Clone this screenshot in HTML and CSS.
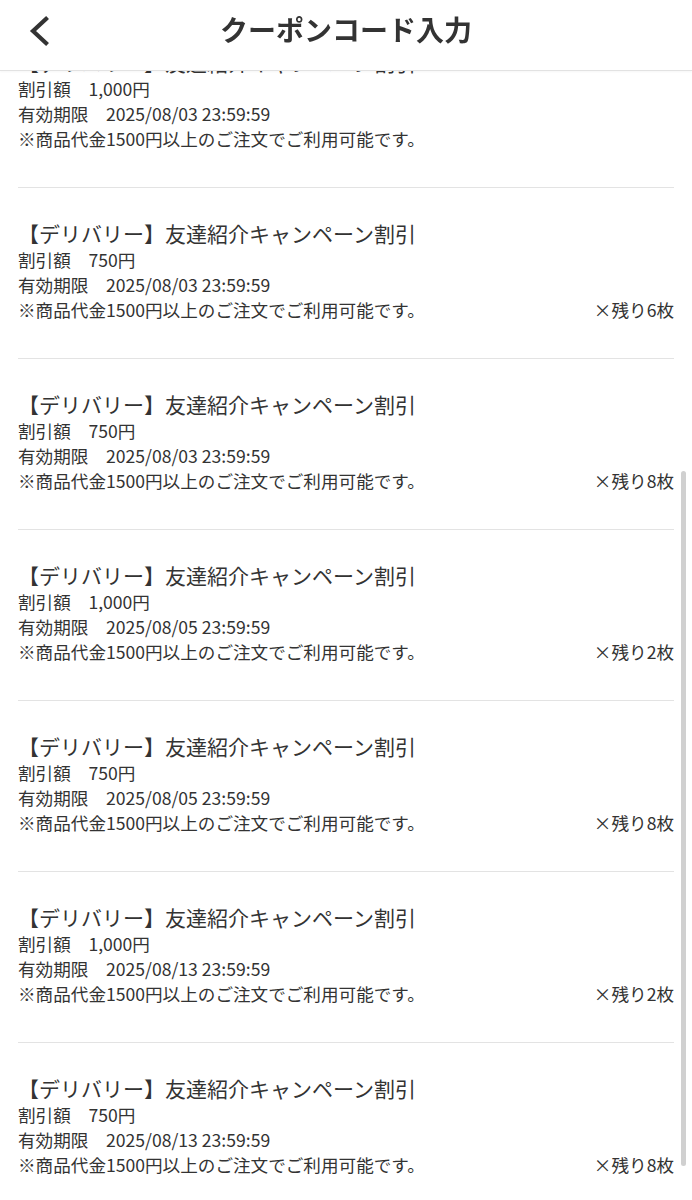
FILE: index.html
```html
<!DOCTYPE html>
<html lang="ja">
<head>
    <meta charset="UTF-8">
    <meta name="viewport" content="width=device-width, initial-scale=1.0">
    <title>クーポンコード入力</title>
    <link rel="stylesheet" href="styles.css">
</head>
<body>
    <header class="top-bar">
        <a class="back" href="#" aria-label="戻る">
            <svg width="24" height="32" viewBox="0 0 24 32">
                <path d="M20 4 L7 16 L20 28" fill="none" stroke="#333" stroke-width="4.2" stroke-linecap="square"/>
            </svg>
        </a>
        <h1>クーポンコード入力</h1>
    </header>

    <main class="coupon-list">
        <!-- 先頭のクーポンはヘッダーの下に隠れている -->
        <div class="coupon">
            <p class="coupon-title">【デリバリー】友達紹介キャンペーン割引</p>
            <p>割引額　1,000円</p>
            <p>有効期限　2025/08/03 23:59:59</p>
            <div class="coupon-foot">
                <p>※商品代金1500円以上のご注文でご利用可能です。</p>
            </div>
        </div>

        <div class="coupon">
            <p class="coupon-title">【デリバリー】友達紹介キャンペーン割引</p>
            <p>割引額　750円</p>
            <p>有効期限　2025/08/03 23:59:59</p>
            <div class="coupon-foot">
                <p>※商品代金1500円以上のご注文でご利用可能です。</p>
                <span class="count">×残り6枚</span>
            </div>
        </div>

        <div class="coupon">
            <p class="coupon-title">【デリバリー】友達紹介キャンペーン割引</p>
            <p>割引額　750円</p>
            <p>有効期限　2025/08/03 23:59:59</p>
            <div class="coupon-foot">
                <p>※商品代金1500円以上のご注文でご利用可能です。</p>
                <span class="count">×残り8枚</span>
            </div>
        </div>

        <div class="coupon">
            <p class="coupon-title">【デリバリー】友達紹介キャンペーン割引</p>
            <p>割引額　1,000円</p>
            <p>有効期限　2025/08/05 23:59:59</p>
            <div class="coupon-foot">
                <p>※商品代金1500円以上のご注文でご利用可能です。</p>
                <span class="count">×残り2枚</span>
            </div>
        </div>

        <div class="coupon">
            <p class="coupon-title">【デリバリー】友達紹介キャンペーン割引</p>
            <p>割引額　750円</p>
            <p>有効期限　2025/08/05 23:59:59</p>
            <div class="coupon-foot">
                <p>※商品代金1500円以上のご注文でご利用可能です。</p>
                <span class="count">×残り8枚</span>
            </div>
        </div>

        <div class="coupon">
            <p class="coupon-title">【デリバリー】友達紹介キャンペーン割引</p>
            <p>割引額　1,000円</p>
            <p>有効期限　2025/08/13 23:59:59</p>
            <div class="coupon-foot">
                <p>※商品代金1500円以上のご注文でご利用可能です。</p>
                <span class="count">×残り2枚</span>
            </div>
        </div>

        <div class="coupon">
            <p class="coupon-title">【デリバリー】友達紹介キャンペーン割引</p>
            <p>割引額　750円</p>
            <p>有効期限　2025/08/13 23:59:59</p>
            <div class="coupon-foot">
                <p>※商品代金1500円以上のご注文でご利用可能です。</p>
                <span class="count">×残り8枚</span>
            </div>
        </div>
    </main>

    <div class="scroll-thumb"></div>
</body>
</html>
```

FILE: styles.css
```css
body {
    margin: 0;
    padding: 0;
    background-color: #fff;
    color: #333;
    font-family: "Noto Sans CJK JP", "Noto Sans", sans-serif;
    height: 1200px;
    overflow: hidden;
}
.top-bar {
    position: fixed;
    top: 0;
    left: 0;
    right: 0;
    height: 70px;
    background-color: #fff;
    border-bottom: 1px solid #e2e2e2;
    box-shadow: 0 1px 2px rgba(0, 0, 0, 0.04);
    display: flex;
    align-items: center;
    justify-content: center;
    z-index: 10;
}
.top-bar h1 {
    margin: 0 0 12px;
    font-size: 28px;
    font-weight: bold;
    color: #333;
    line-height: 40px;
}
.back {
    position: absolute;
    left: 26px;
    top: 15px;
    display: flex;
}
.coupon-list {
    padding: 17px 18px 0;
}
.coupon {
    padding: 32px 0 36px;
    border-bottom: 1px solid #e3e3e3;
}
.coupon p {
    margin: 0;
    font-size: 17.6px;
    line-height: 25px;
}
.coupon .coupon-title {
    font-size: 21px;
    line-height: 27px;
}
.coupon-foot {
    display: flex;
    justify-content: space-between;
    align-items: baseline;
}
.count {
    font-size: 17.6px;
    line-height: 25px;
}
.scroll-thumb {
    position: fixed;
    left: 681px;
    top: 471px;
    width: 5px;
    height: 695px;
    border-radius: 3px;
    background-color: #d0d0d0;
}
```
